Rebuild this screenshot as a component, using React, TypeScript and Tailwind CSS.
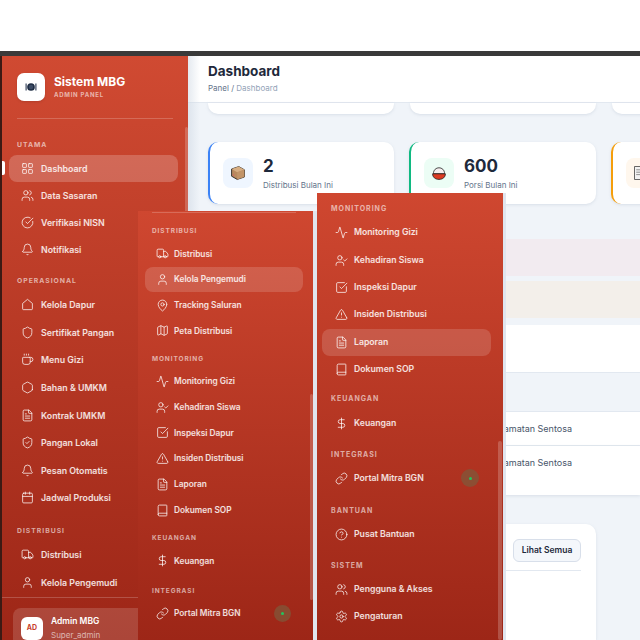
import {
  LayoutGrid, Users, CircleCheckBig, Bell, Shield, Coffee, Hexagon, FileText, ShieldCheck,
  Calendar, Truck, User, MapPin, Map, Activity, UserCheck, SquareCheckBig, TriangleAlert, Book,
  DollarSign, Link, CircleHelp, Settings,
} from "lucide-react";
import type { ReactNode, ComponentType } from "react";

const HouseOutline = ({ className, strokeWidth }: { className?: string; strokeWidth?: number }) => (
  <svg viewBox="0 0 24 24" fill="none" stroke="currentColor" strokeWidth={strokeWidth} strokeLinejoin="round" className={className}>
    <path d="M3 10 12 2.5 21 10v10a1.5 1.5 0 0 1-1.5 1.5h-15A1.5 1.5 0 0 1 3 20z" />
  </svg>
);

type Item = { icon: ComponentType<{ className?: string; strokeWidth?: number }>; label: string; active?: boolean; dot?: boolean };
type Section = { title: string; items: Item[]; top?: string; row?: string };
type Look = { row: string; label: string; gap: string; text: string; active: string; title: string; dot: string };

const sidebar: Section[] = [
  {
    title: "UTAMA",
    row: "h-[27px]",
    items: [
      { icon: LayoutGrid, label: "Dashboard", active: true },
      { icon: Users, label: "Data Sasaran" },
      { icon: CircleCheckBig, label: "Verifikasi NISN" },
      { icon: Bell, label: "Notifikasi" },
    ],
  },
  {
    title: "OPERASIONAL",
    top: "mt-[13px]",
    items: [
      { icon: HouseOutline, label: "Kelola Dapur" },
      { icon: Shield, label: "Sertifikat Pangan" },
      { icon: Coffee, label: "Menu Gizi" },
      { icon: Hexagon, label: "Bahan & UMKM" },
      { icon: FileText, label: "Kontrak UMKM" },
      { icon: ShieldCheck, label: "Pangan Lokal" },
      { icon: Bell, label: "Pesan Otomatis" },
      { icon: Calendar, label: "Jadwal Produksi" },
    ],
  },
  {
    title: "DISTRIBUSI",
    top: "mt-[14px]",
    items: [
      { icon: Truck, label: "Distribusi" },
      { icon: User, label: "Kelola Pengemudi" },
    ],
  },
];

const panelTwo: Section[] = [
  {
    title: "DISTRIBUSI",
    items: [
      { icon: Truck, label: "Distribusi" },
      { icon: User, label: "Kelola Pengemudi", active: true },
      { icon: MapPin, label: "Tracking Saluran" },
      { icon: Map, label: "Peta Distribusi" },
    ],
  },
  {
    title: "MONITORING",
    top: "mt-[11px]",
    items: [
      { icon: Activity, label: "Monitoring Gizi" },
      { icon: UserCheck, label: "Kehadiran Siswa" },
      { icon: SquareCheckBig, label: "Inspeksi Dapur" },
      { icon: TriangleAlert, label: "Insiden Distribusi" },
      { icon: FileText, label: "Laporan" },
      { icon: Book, label: "Dokumen SOP" },
    ],
  },
  { title: "KEUANGAN", top: "mt-[11px]", items: [{ icon: DollarSign, label: "Keuangan" }] },
  { title: "INTEGRASI", top: "mt-[13px]", items: [{ icon: Link, label: "Portal Mitra BGN", dot: true }] },
];

const panelThree: Section[] = [
  {
    title: "MONITORING",
    items: [
      { icon: Activity, label: "Monitoring Gizi" },
      { icon: UserCheck, label: "Kehadiran Siswa" },
      { icon: SquareCheckBig, label: "Inspeksi Dapur" },
      { icon: TriangleAlert, label: "Insiden Distribusi" },
      { icon: FileText, label: "Laporan", active: true },
      { icon: Book, label: "Dokumen SOP" },
    ],
  },
  { title: "KEUANGAN", top: "mt-[11px]", items: [{ icon: DollarSign, label: "Keuangan" }] },
  { title: "INTEGRASI", top: "mt-[13px]", items: [{ icon: Link, label: "Portal Mitra BGN", dot: true }] },
  { title: "BANTUAN", top: "mt-[14px]", items: [{ icon: CircleHelp, label: "Pusat Bantuan" }] },
  {
    title: "SISTEM",
    top: "mt-[12px]",
    items: [
      { icon: Users, label: "Pengguna & Akses" },
      { icon: Settings, label: "Pengaturan" },
    ],
  },
];

const sidebarLook: Look = {
  row: "h-[27.6px]",
  label: "mb-[6px] ml-[8px]",
  gap: "gap-[7px] pl-[12px] pr-[12px]",
  text: "text-[8.8px]",
  active: "bg-white/20",
  title: "text-[6.8px] tracking-[1px]",
  dot: "h-[18px] w-[18px]",
};

const panelTwoLook: Look = {
  row: "h-[25.7px]",
  label: "mb-[5px] ml-[7px]",
  gap: "gap-[5px] pl-[11px] pr-[12px]",
  text: "text-[8.3px]",
  active: "bg-white/15",
  title: "text-[6.5px] tracking-[0.9px]",
  dot: "h-[17px] w-[17px]",
};

const panelThreeLook: Look = {
  row: "h-[27.4px]",
  label: "mb-[6px] ml-[9px]",
  gap: "gap-[6px] pl-[13px] pr-[12px]",
  text: "text-[8.7px]",
  active: "bg-white/15",
  title: "text-[7px] tracking-[1px]",
  dot: "h-[18px] w-[18px]",
};

const NavRow = ({ item, look, row }: { item: Item; look: Look; row: string }) => {
  const Icon = item.icon;
  return (
    <div className={`${row} ${look.gap} flex items-center rounded-[8px] ${item.active ? look.active : ""}`}>
      <Icon className="h-[13px] w-[13px] shrink-0 text-white/85" strokeWidth={1.6} />
      <span className={`${look.text} whitespace-nowrap font-semibold text-white/85`}>{item.label}</span>
      {item.dot && (
        <span className={`${look.dot} ml-auto flex items-center justify-center rounded-full bg-[#7d5a3c]/70`}>
          <span className="h-[3px] w-[3px] rounded-full bg-[#22c55e]" />
        </span>
      )}
    </div>
  );
};

const NavSection = ({ section, look }: { section: Section; look: Look }) => (
  <div className={section.top}>
    <div className={`${look.label} ${look.title} font-bold leading-[9px] text-white/60`}>{section.title}</div>
    {section.items.map((item) => (
      <NavRow key={item.label} item={item} look={look} row={section.row ?? look.row} />
    ))}
  </div>
);

const BoxEmoji = () => (
  <svg viewBox="0 0 20 20" className="h-[16px] w-[16px]">
    <path d="M2 5 L11 2 L18 6 L18 15 L9 18 L2 14 Z" fill="#b98a5e" stroke="#33302c" strokeWidth="1.2" />
    <path d="M2 5 L9 9 L18 6 L11 2 Z" fill="#d6ad82" />
    <path d="M9 9 L9 18 L18 15 L18 6 Z" fill="#c29468" />
    <path d="M4 12 l1 1" stroke="#e0566a" strokeWidth="1.4" />
  </svg>
);

const RiceEmoji = () => (
  <svg viewBox="0 0 20 20" className="h-[16px] w-[16px]">
    <path d="M3 11 C3 1 17 1 17 11 Z" fill="#f5eeee" stroke="#222" strokeWidth="1" />
    <path d="M2 11 H18 C18 15 15 18 10 18 C5 18 2 15 2 11 Z" fill="#dc3a22" stroke="#222" strokeWidth="1" />
  </svg>
);

const MemoEmoji = () => (
  <svg viewBox="0 0 20 20" className="h-[16px] w-[16px]">
    <rect x="2" y="2" width="16" height="16" fill="#f2f2f2" stroke="#444" strokeWidth="1" />
    <path d="M4 6 H16 M4 9 H16 M4 12 H12" stroke="#777" strokeWidth="1" />
    <path d="M12 15 L17 10" stroke="#e0a030" strokeWidth="2" />
  </svg>
);

const PlateIcon = () => (
  <svg viewBox="0 0 16 16" className="h-[14px] w-[14px]">
    <circle cx="8" cy="8" r="4.4" fill="#1f2d44" />
    <circle cx="8" cy="8" r="2.6" fill="#3b4a63" />
    <path d="M2.4 4 V12 M13.6 4 V12" stroke="#33415a" strokeWidth="1.3" />
  </svg>
);

const StatCard = ({
  accent, width, tint, emoji, value, label,
}: { accent: string; width: string; tint: string; emoji: ReactNode; value?: string; label?: string }) => (
  <div className={`${accent} ${width} flex h-[62px] shrink-0 items-center gap-[10px] rounded-[10px] border-l-[2px] bg-white pl-[13px] shadow-[0_1px_3px_rgba(148,163,184,0.25)]`}>
    <div className={`${tint} flex h-[30px] w-[30px] shrink-0 items-center justify-center rounded-[8px]`}>{emoji}</div>
    <div>
      <div className="text-[17px] font-bold leading-[20px] text-[#1e293b]">{value}</div>
      <div className="mt-[3px] whitespace-nowrap text-[8px] leading-[12px] text-[#64748b]">{label}</div>
    </div>
  </div>
);

const TopStub = () => (
  <div className="h-[11px] w-[186px] shrink-0 rounded-b-[10px] bg-white shadow-[0_1px_3px_rgba(148,163,184,0.25)]" />
);

export default function App() {
  return (
    <div className="relative h-[640px] w-[640px] overflow-hidden bg-white font-['Inter',sans-serif]">
      <div className="h-[51px] bg-white" />
      <div className="h-[5px] bg-[#3a3a3a]" />
      <div className="flex h-[584px]">
        <div className="w-[2px] shrink-0 bg-[#3c1a14]" />

        {/* Sidebar */}
        <aside className="relative flex w-[186px] shrink-0 flex-col bg-gradient-to-b from-[#d04a32] to-[#9d2617]">
          <div className="mx-[15px] flex h-[63px] items-center gap-[9px] border-b border-white/20 pb-[1px]">
            <div className="flex h-[28px] w-[28px] items-center justify-center rounded-[7px] bg-white shadow-sm">
              <PlateIcon />
            </div>
            <div>
              <div className="text-[12px] font-bold leading-[16px] text-white">Sistem MBG</div>
              <div className="text-[6px] font-bold leading-[10px] tracking-[0.75px] text-white/60">ADMIN PANEL</div>
            </div>
          </div>
          <div className="flex-1 overflow-hidden pl-[7px] pr-[10px] pt-[21px]">
            {sidebar.map((section) => (
              <NavSection key={section.title} section={section} look={sidebarLook} />
            ))}
          </div>
          <div className="h-[43px] border-t border-white/20 px-[11px] pt-[10px]">
            <div className="flex h-[40px] items-center gap-[8px] rounded-[8px] bg-white/15 pl-[8px]">
              <div className="flex h-[23px] w-[22px] items-center justify-center rounded-[6px] bg-white text-[7px] font-bold text-[#c8402c]">AD</div>
              <div>
                <div className="text-[8.5px] font-semibold leading-[12px] text-white">Admin MBG</div>
                <div className="mt-[2px] text-[8px] leading-[12px] text-white/60">Super_admin</div>
              </div>
            </div>
          </div>
          <div className="absolute right-0 top-[71px] h-[200px] w-[3px] rounded-full bg-white/20" />
        </aside>

        {/* Main */}
        <main className="flex min-w-0 flex-1 flex-col bg-[#f0f4f9]">
          <header className="flex h-[47px] shrink-0 flex-col justify-center border-b border-[#e2e8f0] bg-white pb-[3px] pl-[20px]">
            <div className="text-[13.5px] font-bold leading-[18px] text-[#1e293b]">Dashboard</div>
            <div className="mt-[2px] text-[8px] leading-[12px] text-[#64748b]">
              Panel / <span className="text-[#94a3b8]">Dashboard</span>
            </div>
          </header>
          <div className="flex gap-[16px] pl-[20px]">
            <TopStub />
            <TopStub />
            <TopStub />
          </div>
          <div className="mt-[28px] flex gap-[15px] pl-[20px]">
            <StatCard accent="border-[#3b82f6]" width="w-[186px]" tint="bg-[#eff6ff]" emoji={<BoxEmoji />} value="2" label="Distribusi Bulan Ini" />
            <StatCard accent="border-[#10b981]" width="w-[187px]" tint="bg-[#ecfdf5]" emoji={<RiceEmoji />} value="600" label="Porsi Bulan Ini" />
            <StatCard accent="border-[#f59e0b]" width="w-[186px]" tint="bg-[#fff7ed]" emoji={<MemoEmoji />} />
          </div>
          <div className="mt-[35px] h-[37px] bg-[#f2ebf0]" />
          <div className="mt-[5px] h-[37px] bg-[#f3efea]" />
          <div className="mt-[7px] h-[48px] border-b border-[#e2e8f0] bg-white" />
          <div className="h-[38px]" />
          <div className="flex h-[35px] items-center justify-end border-y border-[#e2e8f0] bg-white pr-[68px] text-[9px] text-[#475569]">Kecamatan Sentosa</div>
          <div className="flex h-[49px] justify-end bg-white pr-[68px] pt-[11px] text-[9px] leading-[12px] text-[#475569] shadow-[0_1px_3px_rgba(148,163,184,0.25)]">Kecamatan Sentosa</div>
          <div className="ml-[20px] mt-[29px] w-[388px] flex-1 rounded-t-[10px] bg-white px-[15px] pt-[15px] shadow-[0_1px_3px_rgba(148,163,184,0.25)]">
            <div className="flex h-[32px] items-start justify-end border-b border-[#e2e8f0]">
              <button className="h-[23px] w-[68px] rounded-[6px] border border-[#d8dfea] bg-[#f4f7fb] text-[8.5px] font-semibold text-[#1e293b]">Lihat Semua</button>
            </div>
          </div>
        </main>
      </div>

      {/* Shadow of the sidebar on the main area */}
      <div className="absolute left-[188px] top-[56px] h-[584px] w-[12px] bg-gradient-to-r from-[#cbd5e1]/50 to-transparent" />

      {/* Overlay: second sidebar capture */}
      <div className="absolute left-[138px] top-[211px] h-[429px] w-[179px] border-r-[4px] border-[#e0e5ee]">
        <div className="relative h-full w-[175px] bg-gradient-to-b from-[#cf4730] to-[#9d2617] pl-[7px] pr-[10px] pt-[1px]">
          <div className="mx-[7px] h-px bg-white/20" />
          <div className="pt-[14px]">
            {panelTwo.map((section) => (
              <NavSection key={section.title} section={section} look={panelTwoLook} />
            ))}
          </div>
          <div className="absolute right-0 top-[183px] h-[206px] w-[3px] rounded-full bg-white/20" />
        </div>
      </div>

      {/* Overlay: third sidebar capture */}
      <div className="absolute left-[317px] top-[193px] h-[447px] w-[189px] border-r-[3px] border-[#e0e5ee]">
        <div className="relative h-full w-[186px] bg-gradient-to-b from-[#cf4730] to-[#9d2617] pl-[5px] pr-[12px] pt-[11px]">
          {panelThree.map((section) => (
            <NavSection key={section.title} section={section} look={panelThreeLook} />
          ))}
          <div className="absolute right-[1px] top-[248px] h-[199px] w-[4px] rounded-full bg-white/20" />
        </div>
      </div>

      {/* Active marker */}
      <div className="absolute left-[2px] top-[161px] h-[14px] w-[3px] rounded-r-[2px] bg-white" />
    </div>
  );
}
